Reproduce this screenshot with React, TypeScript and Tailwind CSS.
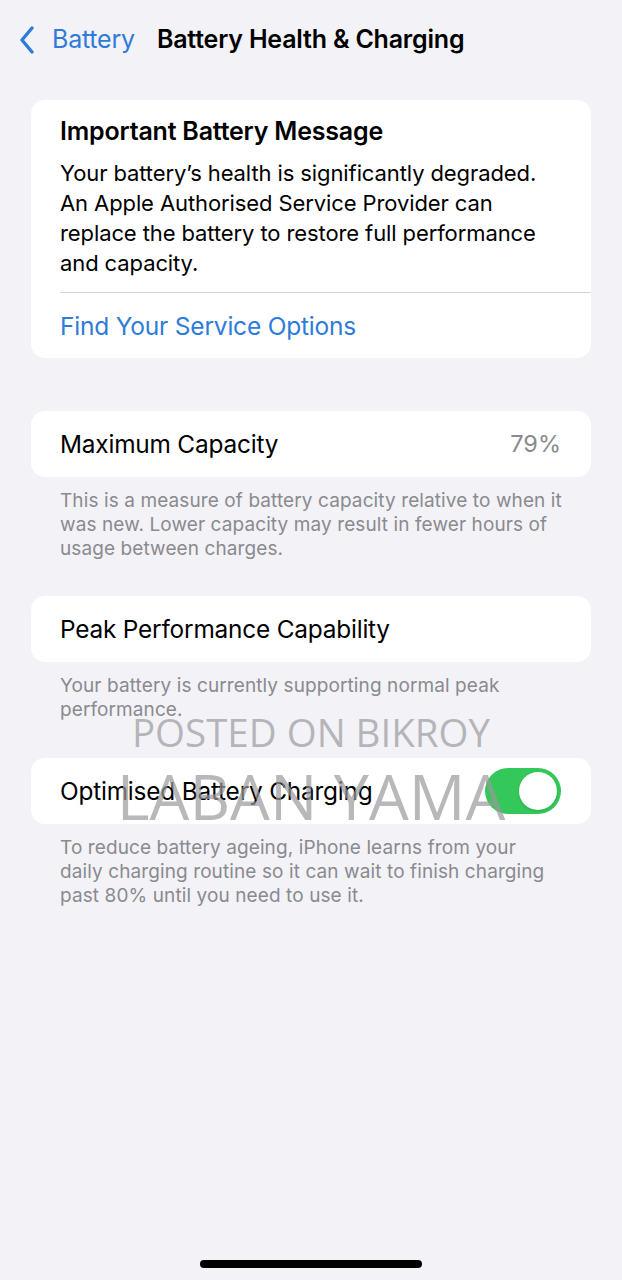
const FONT = "font-['Inter','Liberation_Sans',sans-serif]";

function Footer({ children }: { children: React.ReactNode }) {
  return (
    <p className="mt-[12px] pl-[60px] pr-[48px] text-[19px] leading-[24px] text-[#8a8a8f] tracking-[0.1px]">
      {children}
    </p>
  );
}

function Row({ children }: { children: React.ReactNode }) {
  return (
    <div className="mx-[31px] h-[66px] rounded-[14px] bg-white pl-[29px] pr-[30px] flex items-center justify-between">
      {children}
    </div>
  );
}

export default function App() {
  return (
    <div className={`relative min-h-[1280px] w-full bg-[#f2f2f7] text-black ${FONT}`}>
      {/* nav bar */}
      <div className="h-[80px] flex items-center pl-[19px]">
        <svg width="16" height="28" viewBox="0 0 16 28" className="mr-[17px]">
          <path d="M13 2 L3 14 L13 26" fill="none" stroke="#2f7bd9" strokeWidth="3.4" strokeLinecap="round" strokeLinejoin="round" />
        </svg>
        <span className="text-[25px] text-[#2f7bd9] tracking-[-0.2px]">Battery</span>
        <span className="ml-[22px] text-[25px] font-semibold tracking-[-0.2px]">Battery Health &amp; Charging</span>
      </div>

      {/* important message */}
      <div className="mx-[31px] mt-[20px] rounded-[14px] bg-white pl-[29px] pt-[16px] pb-[17px]">
        <h2 className="text-[25px] leading-[30px] font-semibold tracking-[-0.2px]">Important Battery Message</h2>
        <p className="mt-[12px] pr-[30px] text-[22px] leading-[30px] tracking-[-0.1px]">
          Your battery’s health is significantly degraded. An Apple Authorised Service Provider can replace the battery to restore full performance and capacity.
        </p>
        <div className="mt-[14px] h-px bg-[#d4d4d8]" />
        <div className="mt-[18px] text-[24.5px] leading-[30px] text-[#2f7bd9] tracking-[-0.2px]">Find Your Service Options</div>
      </div>

      <div className="mt-[53px]">
        <Row>
          <span className="text-[24.4px] tracking-[-0.2px]">Maximum Capacity</span>
          <span className="text-[23.5px] text-[#8a8a8f]">79%</span>
        </Row>
        <Footer>
          This is a measure of battery capacity relative to when it was new. Lower capacity may result in fewer hours of usage between charges.
        </Footer>
      </div>

      <div className="mt-[35px]">
        <Row>
          <span className="text-[24.4px] tracking-[-0.2px]">Peak Performance Capability</span>
        </Row>
        <Footer>Your battery is currently supporting normal peak performance.</Footer>
      </div>

      <div className="mt-[36px]">
        <Row>
          <span className="text-[24.4px] tracking-[-0.2px]">Optimised Battery Charging</span>
          <div className="w-[76px] h-[46px] rounded-full bg-[#34c759] p-[4px] flex justify-end">
            <div className="w-[38px] h-[38px] rounded-full bg-white shadow" />
          </div>
        </Row>
        <Footer>
          To reduce battery ageing, iPhone learns from your
          <br />
          daily charging routine so it can wait to finish charging past 80% until you need to use it.
        </Footer>
      </div>

      {/* watermark */}
      <div className="pointer-events-none absolute left-0 right-0 top-[707px] flex flex-col items-center text-[#9a9a9e]/70 font-['Open_Sans',sans-serif]">
        <span className="text-[38.5px] leading-[50px]">POSTED ON BIKROY</span>
        <span className="text-[63px] leading-[70px] mt-[4px]">LABAN YAMA</span>
      </div>

      {/* home indicator */}
      <div className="absolute bottom-[12px] left-[200px] w-[222px] h-[8px] rounded-full bg-black" />
    </div>
  );
}
